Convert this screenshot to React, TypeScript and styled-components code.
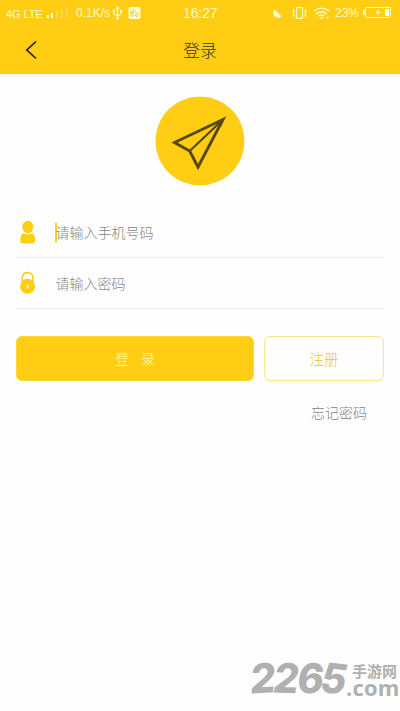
import React from "react";
import styled, { createGlobalStyle } from "styled-components";

const YELLOW = "#ffce14";
const CREAM = "#fffbc4";
const GREY = "#b0b0b0";

const GlobalStyle = createGlobalStyle`
  * { box-sizing: border-box; }
  body { margin: 0; background: #fff; }
  button { font: inherit; }
`;

const Screen = styled.main`
  position: relative;
  width: 400px;
  height: 711px;
  overflow: hidden;
  background: #fefefe;
  font-family: "Noto Sans CJK SC", sans-serif;
  font-weight: 300;
`;

const TopArea = styled.header`
  height: 74px;
  background: ${YELLOW};
`;

const StatusBar = styled.div`
  display: grid;
  grid-template-columns: 1fr 34px 1fr;
  align-items: center;
  height: 26px;
  color: ${CREAM};
  font-family: "Liberation Sans", sans-serif;
  font-weight: 400;
`;

const StatusGroup = styled.div<{ $end?: boolean }>`
  display: flex;
  align-items: center;
  justify-content: ${(p) => (p.$end ? "flex-end" : "flex-start")};
  padding: ${(p) => (p.$end ? "0 8px 0 0" : "0 0 0 6px")};
  white-space: nowrap;
`;

const StatusText = styled.span<{ $size: number; $width: number; $drop?: number; $tight?: number }>`
  flex: none;
  width: ${(p) => p.$width}px;
  padding-top: ${(p) => p.$drop ?? 0}px;
  font-size: ${(p) => p.$size}px;
  line-height: 18px;
  letter-spacing: ${(p) => p.$tight ?? 0}px;
  white-space: nowrap;
`;

const StatusIcon = styled.span<{ $gap?: number }>`
  flex: none;
  margin-right: ${(p) => p.$gap ?? 0}px;
  svg { display: block; }
`;

const NavBar = styled.div`
  display: grid;
  grid-template-columns: 60px 1fr 60px;
  align-items: center;
  height: 48px;
`;

const BackButton = styled.button`
  display: flex;
  padding: 0 0 0 24px;
  border: 0;
  background: none;
`;

const Title = styled.h1`
  margin: 0;
  color: #3c3210;
  font-size: 17px;
  font-weight: 300;
  line-height: 24px;
  text-align: center;
`;

const Logo = styled.div`
  margin: 22px 0 0 155px;
  height: 90px;
  svg { display: block; }
`;

const Form = styled.form`
  margin: 21.5px 16px 0;
`;

const Field = styled.label<{ $height: number }>`
  display: flex;
  align-items: center;
  height: ${(p) => p.$height}px;
  border-bottom: 1px solid #ebebeb;
  svg { flex: none; display: block; margin-left: 3px; }
`;

const Caret = styled.span<{ $active?: boolean }>`
  width: 2px;
  height: 19px;
  margin-left: 19px;
  margin-right: -1.5px;
  background: ${(p) => (p.$active ? YELLOW : "transparent")};
`;

const Placeholder = styled.span`
  color: #858585;
  font-size: 14px;
  line-height: 20px;
`;

const Actions = styled.div`
  display: grid;
  grid-template-columns: 238px 120px;
  gap: 10px;
  margin-top: 27px;
`;

const ActionButton = styled.button<{ $primary?: boolean }>`
  height: 45px;
  padding: 0;
  border: 1px solid ${(p) => (p.$primary ? "#ffd737" : "#fbe48c")};
  border-radius: 6px;
  background: ${(p) => (p.$primary ? YELLOW : "#fefefe")};
  color: ${(p) => (p.$primary ? "#fffac0" : "#f0c42c")};
  font-size: ${(p) => (p.$primary ? 14 : 14.5)}px;
  word-spacing: ${(p) => (p.$primary ? "3px" : "0")};
  white-space: pre;
`;

const Forgot = styled.div`
  margin: 21px 17px 0 0;
  color: #858585;
  font-size: 14px;
  line-height: 20px;
  text-align: right;
`;

const Watermark = styled.div`
  position: absolute;
  left: 250px;
  top: 657px;
  display: flex;
  color: ${GREY};
`;

const BigDigits = styled.span`
  display: flex;
  width: 96px;
  height: 42px;
  font: 800 41px/42px Inter, sans-serif;
`;

const Digit = styled.span<{ $tilt: number }>`
  width: 23.3px;
  transform: skewX(-7deg) rotate(${(p) => p.$tilt}deg) scaleX(0.97);
  transform-origin: 50% 60%;
`;

const Site = styled.div`
  display: flex;
  flex-direction: column;
`;

const SiteName = styled.span`
  height: 22px;
  padding: 6px 0 0 6px;
  font-size: 15px;
  font-weight: 700;
  line-height: 15px;
  white-space: nowrap;
`;

const SiteDomain = styled.span`
  height: 16px;
  font: 700 22px/16px "Open Sans", sans-serif;
  letter-spacing: 0.2px;
`;

const Signal = () => (
  <svg width="23" height="12" viewBox="0 0 23 12">
    <path d="M1 8h2v3H1zM5 6h2v5H5z" fill="#fffde0" />
    <path d="M10 4h1.500v7H10zM15 2h1.500v9H15zM20 1h1.500v10H20z" fill="#ffdd58" />
  </svg>
);

const Usb = () => (
  <svg width="11" height="16" viewBox="0 0 11 16" fill="none" stroke={CREAM} strokeWidth="1.200">
    <path d="M5.500 3v10M1.800 6v3l3.700 2 3.500-2V6" />
    <path d="M3.500 4 5.500 1l2 3zM1 5h2v2H1zM8 5h2v2H8z" fill={CREAM} strokeWidth=".3" />
    <circle cx="5.500" cy="13.300" r="1.500" fill={CREAM} stroke="none" />
  </svg>
);

const AppBadge = () => (
  <svg width="13" height="12" viewBox="0 0 13 12">
    <rect x=".5" width="12" height="12" rx="2" fill="#fffbd0" />
    <g fill="none" stroke="#edc83f" strokeWidth=".9">
      <path d="M3 2.500v3M5.500 2v3M2 5.500h3M6.500 4l2 2" />
      <circle cx="4.200" cy="7.700" r="1.500" />
      <circle cx="9" cy="8" r="1.500" />
    </g>
  </svg>
);

const Moon = () => (
  <svg width="9" height="9" viewBox="0 0 9 9">
    <path d="M1.500 1C.2 3 .3 5.300 2 7.100c1.900 1.800 4.700 1.700 6.300.2C6.500 6 4 3 1.500 1Z" fill="#fffde2" stroke="#fffde2" strokeWidth=".8" />
  </svg>
);

const Vibrate = () => (
  <svg width="15" height="12" viewBox="0 0 15 12" fill="none" stroke={CREAM} strokeWidth="1.200">
    <rect x="4.500" y=".7" width="6" height="10.600" rx=".5" />
    <path d="m.8 2 1.200 2-1 2 1 2-1.200 2M14.200 2 13 4l1 2-1 2 1.200 2" />
  </svg>
);

const Wifi = () => (
  <svg width="17" height="13" viewBox="0 0 17 13" fill="none" stroke={CREAM} strokeWidth="1.400">
    <path d="M.8 4.300q7.700-6.400 15.400 0M3.200 6.900q5.300-4.400 10.600 0M5.600 9.200q2.900-2.400 5.800 0" />
    <path d="m6.800 10.500 1.700 1.900 1.700-1.900q-1.700-1.200-3.400 0Z" fill={CREAM} stroke="none" />
    <path d="M13.800 10.500h2" />
  </svg>
);

const Battery = () => (
  <svg width="30" height="12" viewBox="0 0 30 12">
    <rect x="3.500" y=".5" width="25" height="10" rx="1" fill="none" stroke={CREAM} />
    <path d="M1 3h2v5H1z" fill={CREAM} />
    <path d="M23 2h4v7h-4z" fill="#fffef0" />
    <path d="m17.500 2-4.500 4h3l-1.500 3 4.500-4h-3z" fill={CREAM} />
  </svg>
);

const BackIcon = () => (
  <svg width="14" height="20" viewBox="0 0 14 20">
    <path d="M12 1.500 2.800 10 12 18.500" fill="none" stroke="#241d05" strokeWidth="1.700" />
  </svg>
);

const PaperPlane = () => (
  <svg width="90" height="90" viewBox="0 0 90 90" fill="none" stroke="#574806">
    <circle cx="45" cy="45" r="44.500" fill={YELLOW} stroke="none" />
    <path d="M68 23.500 19.500 46.500 34.700 55 43 71Z" strokeWidth="2.900" />
    <path d="m34.700 55 33.300-31.500" strokeWidth="2.200" />
    <path d="M61 26.500 70 21.500 66 31Z" fill="#574806" stroke="none" />
  </svg>
);

const UserIcon = () => (
  <svg width="17" height="24" viewBox="0 0 17 24" fill={YELLOW}>
    <ellipse cx="8.800" cy="7" rx="5.500" ry="6.200" />
    <path d="M4.500 13.300Q8.800 15.800 13 13.300 16 14.500 16 18.500V20.500q0 3-3 3H4.500q-3.200 0-3.200-3v-2q0-4 3.200-5.200Z" />
  </svg>
);

const LockIcon = () => (
  <svg width="17" height="24" viewBox="0 0 17 24">
    <path d="M3.300 11V7q0-5.400 5.300-5.400T13.900 7v4" fill="none" stroke={YELLOW} strokeWidth="1.600" />
    <circle cx="8.600" cy="15.300" r="7.500" fill={YELLOW} />
    <path d="M8.600 13.300v4.500" stroke="#fff5ba" strokeWidth="1.600" />
  </svg>
);

export default function App() {
  return (
    <Screen>
      <GlobalStyle />
      <TopArea>
        <StatusBar>
          <StatusGroup>
            <StatusText $size={11} $width={40} $drop={2} $tight={-0.1}>4G LTE</StatusText>
            <StatusIcon $gap={7}><Signal /></StatusIcon>
            <StatusText $size={12} $width={36}>0.1K/s</StatusText>
            <StatusIcon $gap={5}><Usb /></StatusIcon>
            <StatusIcon><AppBadge /></StatusIcon>
          </StatusGroup>
          <StatusText $size={14} $width={36} $tight={-0.1}>16:27</StatusText>
          <StatusGroup $end>
            <StatusIcon $gap={10}><Moon /></StatusIcon>
            <StatusIcon $gap={6}><Vibrate /></StatusIcon>
            <StatusIcon $gap={5}><Wifi /></StatusIcon>
            <StatusText $size={12} $width={27}>23%</StatusText>
            <StatusIcon><Battery /></StatusIcon>
          </StatusGroup>
        </StatusBar>
        <NavBar>
          <BackButton aria-label="返回"><BackIcon /></BackButton>
          <Title>登录</Title>
        </NavBar>
      </TopArea>
      <Logo><PaperPlane /></Logo>
      <Form>
        <Field $height={50}>
          <UserIcon />
          <Caret $active />
          <Placeholder>请输入手机号码</Placeholder>
        </Field>
        <Field $height={51}>
          <LockIcon />
          <Caret />
          <Placeholder>请输入密码</Placeholder>
        </Field>
        <Actions>
          <ActionButton type="button" $primary>登  录</ActionButton>
          <ActionButton type="button">注册</ActionButton>
        </Actions>
        <Forgot>忘记密码</Forgot>
      </Form>
      <Watermark>
        <BigDigits>
          <Digit $tilt={-3}>2</Digit>
          <Digit $tilt={2}>2</Digit>
          <Digit $tilt={0}>6</Digit>
          <Digit $tilt={7}>5</Digit>
        </BigDigits>
        <Site>
          <SiteName>手游网</SiteName>
          <SiteDomain>.com</SiteDomain>
        </Site>
      </Watermark>
    </Screen>
  );
}
